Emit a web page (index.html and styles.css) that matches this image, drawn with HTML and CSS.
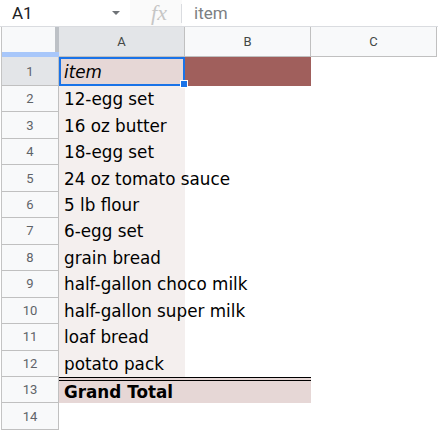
FILE: index.html
```html
<!DOCTYPE html>
<html>
<head>
<meta charset="utf-8">
<link rel="stylesheet" href="styles.css">
</head>
<body>
<div class="fbar">
  <div class="namebox"><span class="ref">A1</span><span class="caret"></span></div>
  <div class="fxbox"><span class="fx">fx</span><span class="sep"></span></div>
  <div class="formula">item</div>
</div>
<div class="sheet">
  <div class="corner"><div class="corner-top"></div><div class="corner-bottom"></div></div>
  <div class="ch sel">A</div>
  <div class="ch">B</div>
  <div class="ch">C</div>

  <div class="rh sel">1</div>
  <div class="c a1">item<span class="handle"></span></div>
  <div class="c b1"></div>
  <div class="c"></div>

  <div class="rh">2</div><div class="c a">12-egg set</div><div class="c"></div><div class="c"></div>
  <div class="rh">3</div><div class="c a">16 oz butter</div><div class="c"></div><div class="c"></div>
  <div class="rh">4</div><div class="c a">18-egg set</div><div class="c"></div><div class="c"></div>
  <div class="rh">5</div><div class="c a">24 oz tomato sauce</div><div class="c"></div><div class="c"></div>
  <div class="rh">6</div><div class="c a">5 lb flour</div><div class="c"></div><div class="c"></div>
  <div class="rh">7</div><div class="c a">6-egg set</div><div class="c"></div><div class="c"></div>
  <div class="rh">8</div><div class="c a">grain bread</div><div class="c"></div><div class="c"></div>
  <div class="rh">9</div><div class="c a">half-gallon choco milk</div><div class="c"></div><div class="c"></div>
  <div class="rh">10</div><div class="c a">half-gallon super milk</div><div class="c"></div><div class="c"></div>
  <div class="rh">11</div><div class="c a">loaf bread</div><div class="c"></div><div class="c"></div>
  <div class="rh">12</div><div class="c a">potato pack</div><div class="c"></div><div class="c"></div>
  <div class="rh">13</div><div class="c total">Grand Total</div><div class="c total"></div><div class="c"></div>
  <div class="rh">14</div><div class="c"></div><div class="c"></div><div class="c"></div>
</div>
</body>
</html>
```
FILE: styles.css
```css
* { box-sizing: border-box; }
body {
  margin: 0;
  width: 438px;
  height: 431px;
  overflow: hidden;
  background: #fff;
  font-family: Roboto, "Liberation Sans", Arial, sans-serif;
}
.fbar {
  display: flex;
  height: 27px;
  border-bottom: 1px solid #dadce0;
}
.namebox {
  width: 130px;
  display: flex;
  align-items: center;
  justify-content: space-between;
  padding: 0 10px 0 12px;
  font-size: 17px;
  color: #202124;
}
.caret {
  width: 0;
  height: 0;
  border-left: 4px solid transparent;
  border-right: 4px solid transparent;
  border-top: 4px solid #6f7377;
}
.fxbox {
  width: 52px;
  display: flex;
  align-items: center;
  justify-content: flex-end;
  gap: 14px;
  background: #fafafa;
}
.fx {
  font: italic 22px "Liberation Serif", serif;
  color: #c6c6c6;
}
.sep {
  width: 1px;
  height: 19px;
  background: #dadce0;
}
.formula {
  display: flex;
  align-items: center;
  padding-left: 12px;
  font-size: 17px;
  color: #7c7f83;
}
.sheet {
  display: grid;
  grid-template-columns: 57px 126px 126px 126px;
  grid-template-rows: 30px 29px repeat(13, 26.46px);
  margin-left: 1px;
  border-left: 1px solid #c4c4c4;
}
.corner {
  display: flex;
  flex-direction: column;
  background: #f8f9fa;
}
.corner-top {
  flex: 1;
  border-right: 4px solid #bdc1c6;
}
.corner-bottom {
  height: 5px;
  background: #a8c7fa;
}
.ch {
  display: flex;
  align-items: center;
  justify-content: center;
  background: #f8f9fa;
  border-right: 1px solid #c0c0c0;
  border-bottom: 1px solid #c0c0c0;
  font-size: 13px;
  color: #444746;
}
.ch.sel { background: #e3e5e8; }
.rh {
  display: flex;
  align-items: center;
  justify-content: center;
  background: #f8f9fa;
  border-right: 1px solid #c0c0c0;
  border-bottom: 1px solid #c0c0c0;
  font-size: 13px;
  color: #5f6368;
}
.rh.sel { background: #e3e5e8; }
.c {
  display: flex;
  align-items: center;
  padding-left: 5px;
  white-space: nowrap;
  font: 16.8px "DejaVu Sans", Verdana, sans-serif;
  color: #000;
}
.a { background: #f4efee; }
.a1 {
  position: relative;
  background: #e6d7d6;
  font-style: italic;
}
.a1::after {
  content: "";
  position: absolute;
  inset: 0;
  border: 2px solid #1a73e8;
}
.handle {
  position: absolute;
  right: -3px;
  bottom: -2px;
  width: 8px;
  height: 8px;
  background: #1a73e8;
  border: 1px solid #fff;
  z-index: 2;
}
.b1 { background: #a05f5c; }
.total {
  background: #e6d7d6;
  border-top: 4px double #000;
  font-weight: bold;
}
```
